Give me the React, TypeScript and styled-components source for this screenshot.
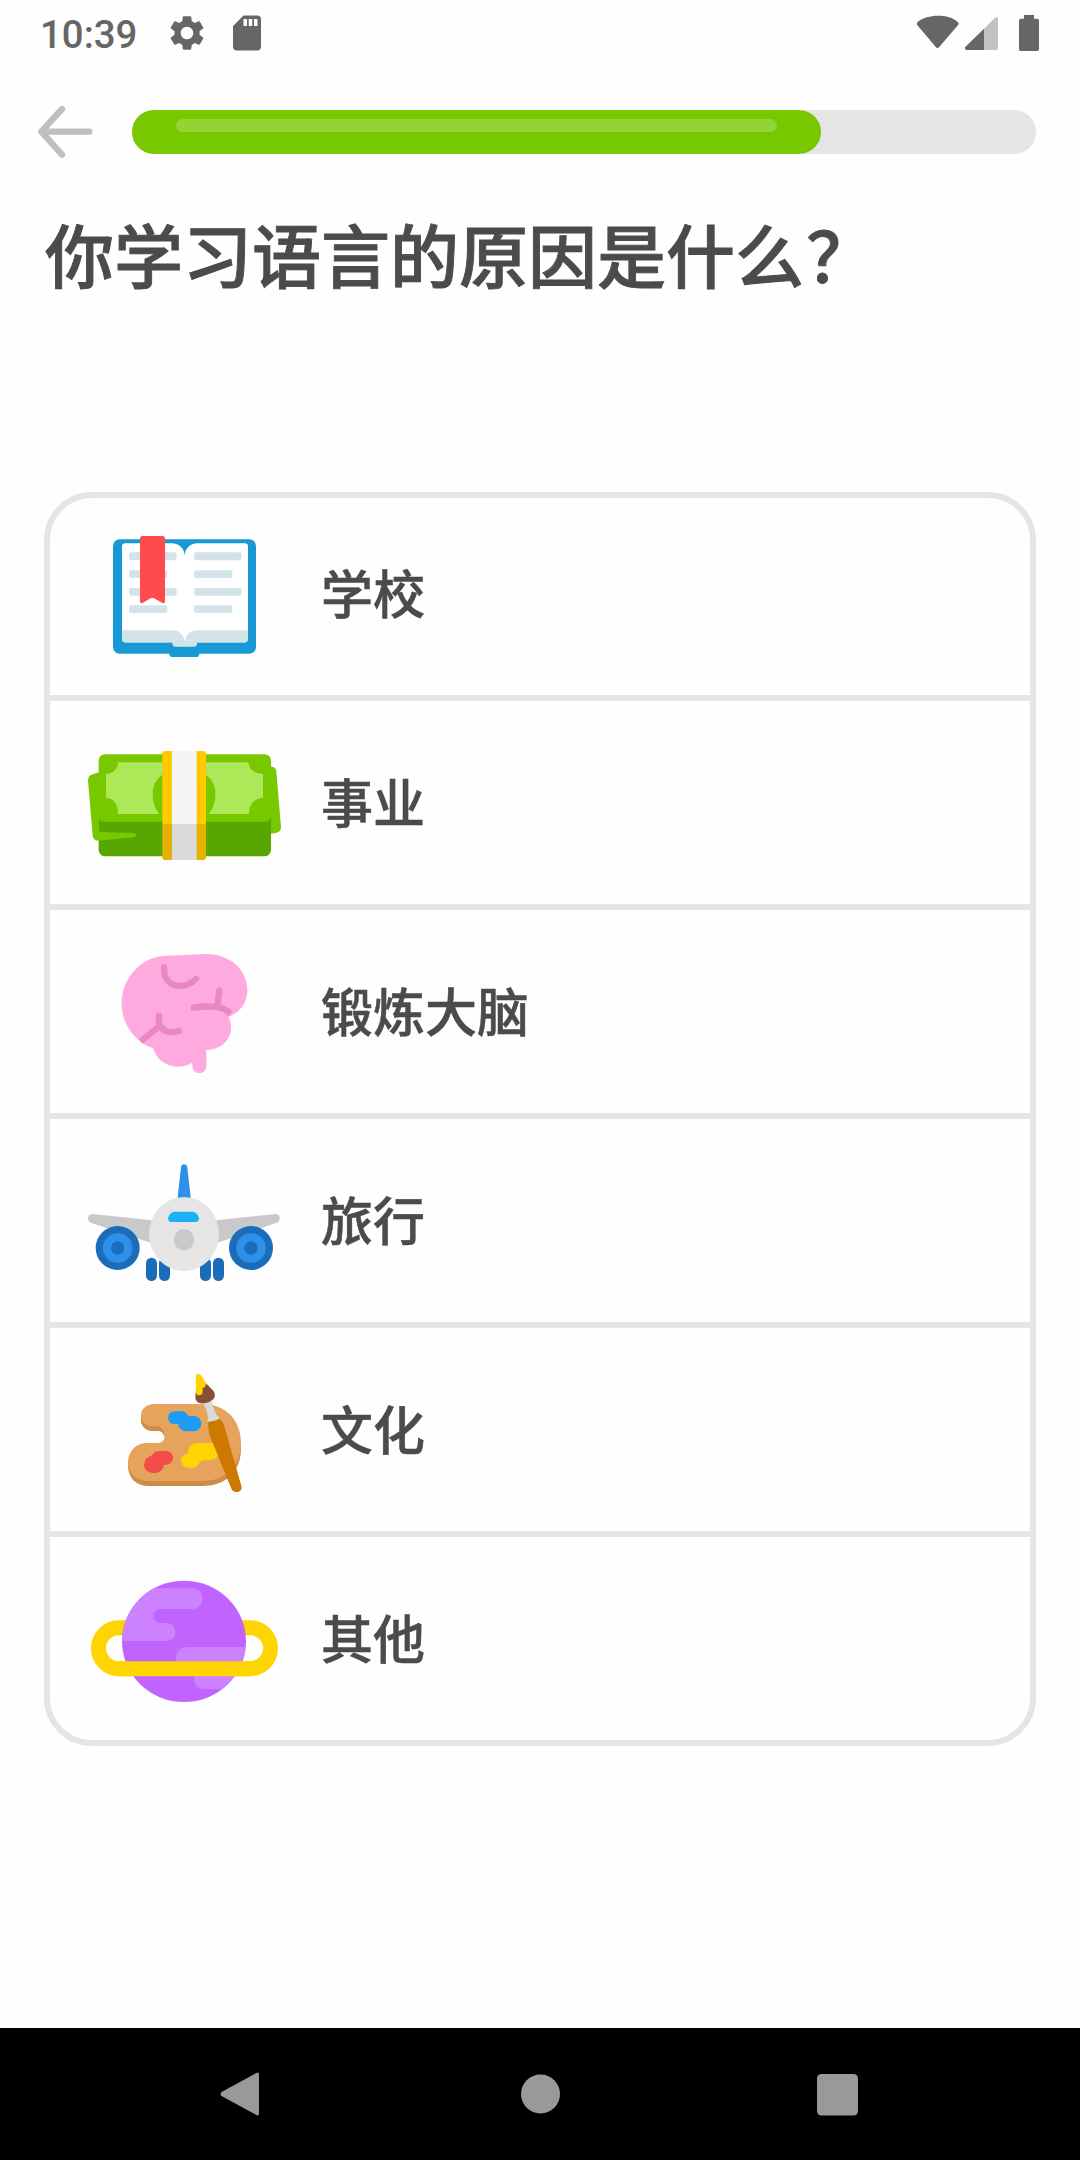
import React from "react";
import styled, { createGlobalStyle } from "styled-components";
import { MdSettings, MdSdCard } from "react-icons/md";

const GlobalStyle = createGlobalStyle`
  html, body { margin: 0; padding: 0; background: #fefefe; }
  *, *::before, *::after { box-sizing: border-box; }
`;

const Screen = styled.div`
  display: flex;
  flex-direction: column;
  width: 1080px;
  height: 2160px;
  overflow: hidden;
  background: #fefefe;
  color: #4b4b4b;
  font-family: "Noto Sans CJK SC", sans-serif;
`;

const StatusBar = styled.header`
  display: flex;
  align-items: center;
  justify-content: space-between;
  height: 66px;
  padding: 0 41px 0 40px;
  color: #666664;
`;

const StatusGroup = styled.div<{ $gap: number }>`
  display: flex;
  align-items: center;
  gap: ${(p) => p.$gap}px;
`;

const Clock = styled.span`
  width: 107px;
  font: 500 38.4px/66px Roboto, sans-serif;
  padding-top: 4px;
`;

const TopBar = styled.div`
  display: flex;
  align-items: center;
  height: 132px;
  padding: 0 44px 0 36px;
`;

const BackButton = styled.button`
  display: flex;
  width: 96px;
  padding: 0;
  border: 0;
  background: none;
`;

const Track = styled.div`
  flex: 1;
  height: 44px;
  border-radius: 22px;
  background: #e5e5e5;
`;

const Fill = styled.div`
  width: 689px;
  height: 44px;
  padding: 9px 44px 0;
  border-radius: 22px;
  background: #78c800;
`;

const Shine = styled.div`
  height: 13px;
  border-radius: 7px;
  background: #93d334;
`;

const Title = styled.h1`
  height: 294px;
  margin: 0;
  padding: 4px 45px 0;
  font-size: 69px;
  font-weight: 500;
  line-height: 103px;
  white-space: nowrap;
  -webkit-text-stroke: 0.9px #4b4b4b;
`;

const QuestionMark = styled.span`
  margin-left: 2px;
`;

const Options = styled.ul`
  display: flex;
  flex-direction: column;
  margin: 0 44px;
  padding: 0;
  height: 1254px;
  list-style: none;
  border: 6px solid #e5e5e5;
  border-radius: 48px;
`;

const Label = styled.span`
  margin-bottom: 4px;
  font-size: 52px;
  font-weight: 500;
  line-height: 76px;
  -webkit-text-stroke: 0.5px #4b4b4b;
`;

const Option = styled.li`
  display: flex;
  align-items: center;
  gap: 41px;
  height: 209px;
  padding-left: 20px;
  border-bottom: 6px solid #e5e5e5;
  &:first-child { height: 203px; }
  &:first-child ${Label} { margin-bottom: 10px; }
  &:last-child { height: 203px; border-bottom: 0; }
`;

const NavBar = styled.nav`
  display: grid;
  grid-template-columns: repeat(3, 300px);
  justify-content: center;
  align-items: center;
  justify-items: center;
  height: 132px;
  margin-top: auto;
  background: #000;
`;

const Art = styled.svg`
  display: block;
  flex: none;
  width: 210px;
  height: 151px;
`;

const Book = () => (
  <Art viewBox="120 123 630 453">
    <rect x="249" y="178" width="429" height="343" rx="20" fill="#1899d6" />
    <rect x="418" y="500" width="90" height="31" rx="10" fill="#1899d6" />
    <path d="M276 440H654V478Q654 488 644 488H501V491Q501 500 491 500H437Q427 500 427 491V488H286Q276 488 276 478Z" fill="#d2e4e8" />
    <path d="M276 200Q276 190 286 190H426C447 190 463 205 464 227C465 205 481 190 502 190H644Q654 190 654 200V451H502C481 451 466 465 464 486C462 465 447 451 426 451H276Z" fill="#fff" />
    <g fill="#d2e4e8">
      <rect x="297" y="217" width="143" height="24" rx="7" />
      <rect x="297" y="271" width="115" height="23" rx="7" />
      <rect x="297" y="324" width="143" height="23" rx="7" />
      <rect x="297" y="376" width="115" height="23" rx="7" />
      <rect x="492" y="217" width="143" height="24" rx="7" />
      <rect x="492" y="271" width="115" height="23" rx="7" />
      <rect x="492" y="324" width="143" height="23" rx="7" />
      <rect x="492" y="376" width="115" height="23" rx="7" />
    </g>
    <path d="M330 176Q330 168 338 168H397Q405 168 405 176V363Q405 373 396 368L372 355Q367 353 362 355L339 368Q330 373 330 363Z" fill="#ff4b4b" />
  </Art>
);

const Money = () => (
  <Art viewBox="0 -9 630 453" overflow="visible">
    <path d="M595 110H606Q618 112 619 124L633 291Q633 305 620 308L595 313Z" fill="#78c800" />
    <rect x="86" y="200" width="517" height="179" rx="20" fill="#58a700" />
    <path d="M86 256V94Q86 73 107 73H582Q603 73 603 94V256Q603 275 584 275H105Q92 275 87 266V306L190 309Q199 311 199 316Q198 321 190 322L86 332Q70 332 68 317L54 151Q54 138 65 134L86 127Z" fill="#78c800" />
    <path d="M144 97H535C537 118 555 132 579 132V203C555 204 537 221 537 252H144C144 223 132 205 108 203V132C130 130 144 117 144 97Z" fill="#ace959" />
    <path d="M268 252C256 238 248 216 248 192C248 167 259 146 277 134H407C426 146 436 167 436 192C436 216 429 237 416 252Z" fill="#78c800" />
    <path d="M277 70Q277 63 286 63H399Q408 63 408 72V283H277Z" fill="#ffc800" />
    <path d="M277 282H408V381Q408 390 399 390H286Q277 390 277 381Z" fill="#e5b000" />
    <path d="M306 63H380V283H306Z" fill="#f5f5f5" />
    <path d="M306 282H380V390H306Z" fill="#dadada" />
  </Art>
);

const Brain = () => (
  <Art viewBox="0 18 630 453">
    <path d="M288 77L410 72C481 73 532 119 532 181C532 218 511 248 475 261C483 274 484 286 483 298C480 333 450 360 409 360V408C409 421 400 429 388 429C375 429 367 421 367 409V398C353 406 340 410 323 410C286 409 260 389 249 355C193 335 155 280 155 221C155 144 213 79 288 77Z" fill="#ffaade" />
    <g fill="none" stroke="#e887c1" strokeWidth="19" strokeLinecap="round">
      <path d="M282 112C280 148 301 168 331 168C351 168 363 161 378 147" />
      <path d="M448 181L442 228" />
      <path d="M371 233C403 229 438 227 457 235C467 239 474 244 482 251" strokeLinecap="butt" />
      <path d="M371 233L400 230" />
      <path d="M267 258C263 291 281 315 327 303" />
      <path d="M267 289L212 334" strokeLinecap="butt" />
    </g>
  </Art>
);

const Plane = () => (
  <Art viewBox="0 15 630 453">
    <path d="M333 83Q334 73 342 73Q351 73 352 83L363 180H322Z" fill="#2f90ea" />
    <path d="M246 241L68 222Q54 223 54 236Q55 246 67 250L246 310ZM438 241L616 222Q630 223 629 236Q628 246 616 250L438 310Z" fill="#c9c9c9" />
    <g fill="#1a6dbb">
      <rect x="228" y="353" width="33" height="70" rx="16.5" />
      <rect x="267" y="353" width="33" height="70" rx="16.5" />
      <rect x="390" y="353" width="33" height="70" rx="16.5" />
      <rect x="429" y="353" width="33" height="70" rx="16.5" />
      <circle cx="143" cy="324" r="66" />
      <circle cx="543" cy="324" r="66" />
    </g>
    <ellipse cx="342" cy="282" rx="105" ry="111" fill="#e5e5e5" />
    <path d="M294 235C297 223 304 215 317 215H364C377 215 384 223 387 235Q387 246 376 246H305Q294 246 294 235Z" fill="#1cb0f6" />
    <ellipse cx="342" cy="299" rx="30.5" ry="32" fill="#c9c9c9" />
    <g fill="#2f90ea">
      <circle cx="143" cy="324" r="44.5" />
      <circle cx="543" cy="324" r="44.5" />
    </g>
    <g fill="#1a6dbb">
      <circle cx="143" cy="324" r="20" />
      <circle cx="543" cy="324" r="20" />
    </g>
  </Art>
);

const paletteShape =
  "M253 162H398C468 162 513 212 513 279C513 345 468 393 398 393H236C200 393 174 369 174 336C174 303 199 278 234 278H263C276 278 283 270 283 261C282 240 267 229 249 229C226 229 213 215 213 197C213 177 230 162 253 162Z";

const Palette = () => (
  <Art viewBox="0 12 630 453">
    <path d="M213 197V211C215 231 229 243 250 243H268Q278 245 282 258L290 229ZM174 336V350C175 386 202 408 236 408H399C467 408 513 365 513 295V279Z" fill="#cd8d47" />
    <path d={paletteShape} fill="#e5a35b" />
    <path d="M263 278C276 278 283 270 283 261C281 246 271 243 263 243H230V278Z" fill="#fefefe" />
    <path d="M213 197C214 217 229 229 249 229H262C278 231 283 247 283 261C279 247 274 243 263 243H250C229 243 213 230 213 210Z" fill="#cd8d47" />
    <g fill="#1e9af8">
      <rect x="294" y="184" width="60" height="38" rx="19" />
      <rect x="325" y="198" width="69" height="46" rx="23" />
      <path d="M333 184C347 185 347 193 356 198L334 218Z" />
    </g>
    <g fill="#f54b4b">
      <rect x="247" y="303" width="62" height="41" rx="20.5" />
      <rect x="222" y="319" width="59" height="50" rx="25" />
      <path d="M238 320C248 318 250 306 260 304L285 343C278 346 281 352 276 354Z" />
    </g>
    <g fill="#ffd403">
      <rect x="355" y="279" width="92" height="51" rx="25.5" />
      <rect x="333" y="311" width="55" height="42" rx="21" />
      <path d="M350 311Q356 309 356 296L410 330C393 330 389 336 386 342Z" />
    </g>
    <path d="M412 214L444 206Q458 211 463 229L514 407C517 417 511 426 500 426C491 427 486 421 483 413L420 258C415 244 414 229 415 214Z" fill="#cd7900" />
    <path d="M398 160L427 153L429 171L440 196Q448 198 447 206Q443 211 413 216Q410 210 415 204L408 176Z" fill="#dadada" />
    <path d="M378 116L407 99L430 122C441 139 432 152 410 158C391 164 376 157 376 142Z" fill="#865132" />
    <path d="M377 78Q379 71 385 71Q390 71 393 76L408 98Q410 108 398 115V127Q396 136 388 136Q380 136 378 128Z" fill="#ffd403" />
  </Art>
);

const Planet = () => (
  <Art viewBox="120 9 630 453">
    <defs>
      <clipPath id="globe"><ellipse cx="462" cy="244" rx="186" ry="182" /></clipPath>
    </defs>
    <rect x="205.5" y="203.5" width="516" height="122.5" rx="61" fill="none" stroke="#ffd403" strokeWidth="45" />
    <g clipPath="url(#globe)">
      <rect x="270" y="60" width="390" height="370" fill="#c063ff" />
      <g fill="#cc82ff">
        <path d="M270 85H487C506 86 517 98 517 116C517 134 506 146 487 147H392C378 148 371 156 371 168C371 180 379 188 392 189H409C426 190 436 200 436 216C436 232 426 243 409 243H270Z" />
        <path d="M660 261H472C449 262 437 276 437 303V325H492V355C493 376 504 387 524 387H660Z" />
      </g>
    </g>
    <path d="M267 303.5H660V348.5H267Z" fill="#ffd403" />
  </Art>
);

const options = [
  { label: "学校", Icon: Book },
  { label: "事业", Icon: Money },
  { label: "锻炼大脑", Icon: Brain },
  { label: "旅行", Icon: Plane },
  { label: "文化", Icon: Palette },
  { label: "其他", Icon: Planet },
];

export default function App() {
  return (
    <Screen>
      <GlobalStyle />
      <StatusBar>
        <StatusGroup $gap={18.5}>
          <Clock>10:39</Clock>
          <MdSettings size={42} />
          <MdSdCard size={42} />
        </StatusGroup>
        <StatusGroup $gap={0}>
          <svg width="123" height="66" viewBox="408 0 369 198" fill="currentColor">
            <path d="M411 74Q409 69 413 66C440 43 505 40 533 66Q538 69 535 74L477 142Q472 147 468 142Z" />
            <path d="M612 86V150H559Q553 148 555 142Z" />
            <path d="M612 86L647 51Q654 50 654 57V145Q654 150 649 150H612Z" fill="#c2c2c1" />
            <path d="M732 45H762V56H772Q777 56 777 61V147Q777 153 772 153H722Q717 153 717 147V61Q717 56 722 56H732Z" />
          </svg>
        </StatusGroup>
      </StatusBar>
      <TopBar>
        <BackButton aria-label="返回">
          <svg width="60" height="60" viewBox="108 306 180 180" fill="none" stroke="#bfbfbf" strokeWidth="19" strokeLinecap="round" strokeLinejoin="round">
            <path d="M186 327L124 395L186 464M124 395H268" />
          </svg>
        </BackButton>
        <Track>
          <Fill><Shine /></Fill>
        </Track>
      </TopBar>
      <Title>你学习语言的原因是什么<QuestionMark>？</QuestionMark></Title>
      <Options>
        {options.map(({ label, Icon }) => (
          <Option key={label}>
            <Icon />
            <Label>{label}</Label>
          </Option>
        ))}
      </Options>
      <NavBar>
        <svg width="48" height="48" viewBox="0 0 48 48" fill="#999">
          <path d="M5.5 22L41 2.7Q43 2 43 4.5V43.5Q43 46 41 45.3L5.5 26Q3.5 24 5.5 22Z" />
        </svg>
        <svg width="40" height="40" viewBox="0 0 40 40" fill="#999">
          <circle cx="20.5" cy="20" r="19.5" />
        </svg>
        <svg width="48" height="48" viewBox="0 0 48 48" fill="#999">
          <rect x="1" y="4" width="41" height="41.5" rx="4.5" />
        </svg>
      </NavBar>
    </Screen>
  );
}
